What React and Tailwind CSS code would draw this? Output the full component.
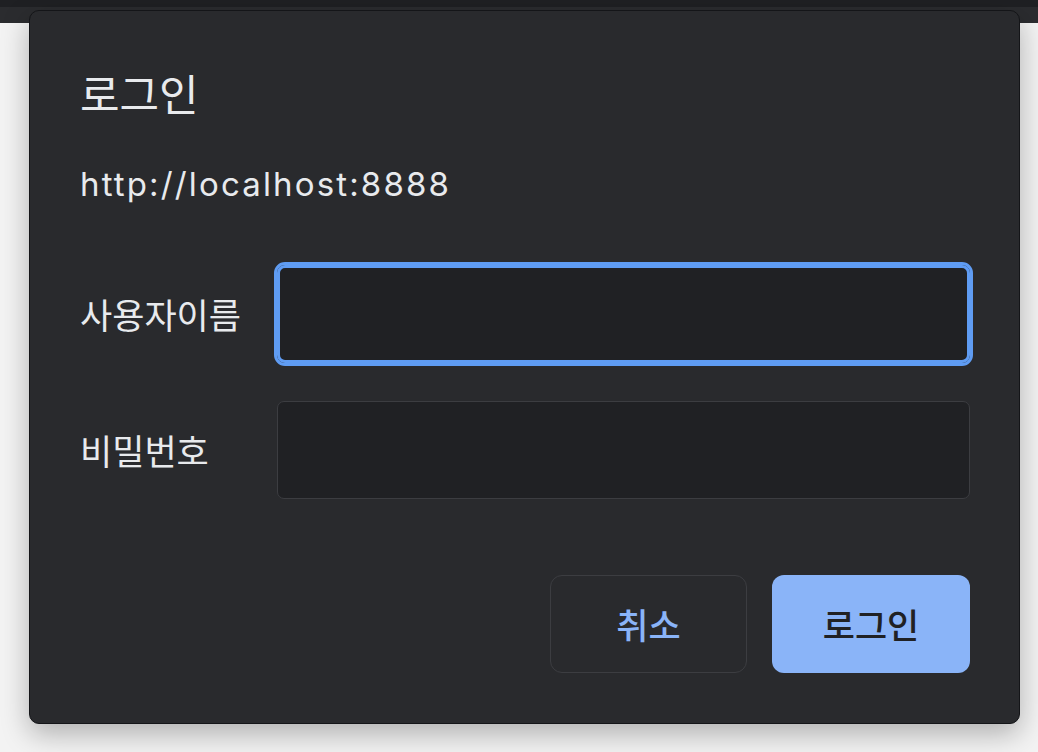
import React from "react";

const ko = { fontFamily: '"Noto Sans CJK KR", "Noto Sans", sans-serif' };
const lat = { fontFamily: 'Inter, "Noto Sans CJK KR", sans-serif' };

export default function App() {
  return (
    <div className="relative w-[1038px] h-[752px] overflow-hidden bg-[#f3f3f3]">
      <div className="h-[7px] bg-[#1f2023]" />
      <div className="h-[16px] bg-[#2b2c2f]" />
      <div className="absolute left-[29px] top-[10px] w-[991px] h-[714px] rounded-[10px] border border-[#141518] bg-[#292a2d] shadow-[0_10px_28px_rgba(0,0,0,0.28)] flex flex-col pl-[50px] pr-[49px] pt-[58px] text-[#e8eaed]">
        <div className="text-[43px] leading-[46px]" style={ko}>로그인</div>
        <div className="mt-[49px] text-[33px] leading-[40px] tracking-[2.15px]" style={lat}>http://localhost:8888</div>
        <div className="mt-[61px] flex items-center">
          <div className="w-[197px] text-[35px]" style={ko}>사용자이름</div>
          <div className="flex-1 h-[98px] rounded-[8px] bg-[#202124] border-[3px] border-[#5f9cf3] outline-[3px] outline-solid outline-[#5f9cf3]" />
        </div>
        <div className="mt-[38px] flex items-center">
          <div className="w-[197px] text-[35px]" style={ko}>비밀번호</div>
          <div className="flex-1 h-[98px] rounded-[7px] bg-[#202124] border border-[#3c3d41]" />
        </div>
        <div className="mt-[76px] flex justify-end gap-[25px]">
          <div className="w-[197px] h-[98px] rounded-[12px] border border-[#3c3d41] flex items-center justify-center text-[#8ab4f8] text-[35px] font-medium" style={ko}>취소</div>
          <div className="w-[198px] h-[98px] rounded-[12px] bg-[#8ab4f8] flex items-center justify-center text-[#202124] text-[35px] font-medium" style={ko}>로그인</div>
        </div>
      </div>
    </div>
  );
}
